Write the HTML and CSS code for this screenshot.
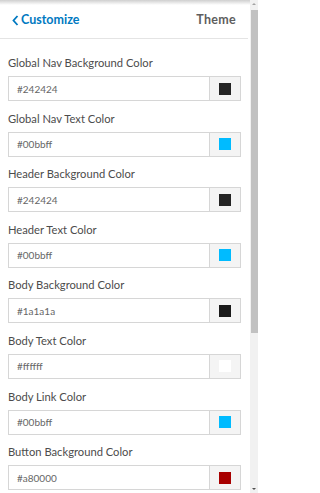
FILE: index.html
```html
<!DOCTYPE html>
<html>
<head>
<meta charset="utf-8">
<link rel="stylesheet" href="styles.css">
</head>
<body>
<div class="frame">
  <div class="pane">
    <div class="topshade"></div>
    <div class="header">
      <a class="back">
        <svg class="chev" width="7" height="11" viewBox="0 0 7 11"><path d="M5.5 1 L1.5 5.5 L5.5 10" fill="none" stroke="#0079c1" stroke-width="1.8"/></svg>
        <span>Customize</span>
      </a>
      <span class="title">Theme</span>
    </div>
    <div class="fields">
      <div class="field"><div class="label">Global Nav Background Color</div><div class="input"><span class="val">#242424</span><span class="btn"><i class="sw" style="background:#242424"></i></span></div></div>
      <div class="field"><div class="label">Global Nav Text Color</div><div class="input"><span class="val">#00bbff</span><span class="btn"><i class="sw" style="background:#00bbff"></i></span></div></div>
      <div class="field"><div class="label">Header Background Color</div><div class="input"><span class="val">#242424</span><span class="btn"><i class="sw" style="background:#242424"></i></span></div></div>
      <div class="field"><div class="label">Header Text Color</div><div class="input"><span class="val">#00bbff</span><span class="btn"><i class="sw" style="background:#00bbff"></i></span></div></div>
      <div class="field"><div class="label">Body Background Color</div><div class="input"><span class="val">#1a1a1a</span><span class="btn"><i class="sw" style="background:#1a1a1a"></i></span></div></div>
      <div class="field"><div class="label">Body Text Color</div><div class="input"><span class="val">#ffffff</span><span class="btn"><i class="sw" style="background:#ffffff"></i></span></div></div>
      <div class="field"><div class="label">Body Link Color</div><div class="input"><span class="val">#00bbff</span><span class="btn"><i class="sw" style="background:#00bbff"></i></span></div></div>
      <div class="field"><div class="label">Button Background Color</div><div class="input"><span class="val">#a80000</span><span class="btn"><i class="sw" style="background:#a80000"></i></span></div></div>
    </div>
  </div>
  <div class="scrollbar">
    <div class="arrow up"></div>
    <div class="thumb"></div>
    <div class="rest"></div>
    <div class="arrow down"></div>
  </div>
</div>
</body>
</html>
```
FILE: styles.css
```css
html, body { margin: 0; padding: 0; background: #fff; }
body { width: 258px; height: 493px; overflow: hidden; font-family: Lato, "Noto Sans", sans-serif; }
.frame { display: flex; width: 258px; height: 493px; }
.pane { width: 250px; height: 493px; overflow: hidden; position: relative; background: #fff; }
.topshade { position: absolute; left: 0; top: 0; width: 250px; height: 5px; background: linear-gradient(#cfcfcf, rgba(255,255,255,0)); }
.header { height: 38px; border-bottom: 1px solid #e4e4e4; display: flex; align-items: center; justify-content: space-between; padding: 0 12px 0 12px; box-sizing: content-box; margin-right: 2px; }
.back { display: flex; align-items: center; gap: 2px; color: #0079c1; font-weight: 700; font-size: 12.5px; padding-top: 1px; }
.chev { margin-top: 1px; }
.title { color: #5e5e5e; font-size: 12.5px; font-weight: 700; letter-spacing: 0.3px; padding-top: 1px; }
.fields { padding: 16px 9px 0 8px; }
.field { margin-bottom: 9.6px; }
.label { height: 16px; line-height: 16px; font-size: 11.2px; color: #4c4c4c; margin-bottom: 5px; }
.input { height: 25px; box-sizing: border-box; border: 1px solid #d6d6d6; display: flex; align-items: stretch; background: #fff; }
.val { flex: 1; display: flex; align-items: center; padding-left: 8px; font-size: 10px; color: #666; }
.btn { width: 30px; border-left: 1px solid #d6d6d6; background: #f4f4f4; display: flex; align-items: center; justify-content: center; }
.sw { display: block; width: 12px; height: 12px; }
.scrollbar { width: 8px; height: 493px; background: #f1f1f1; display: flex; flex-direction: column; align-items: center; }
.arrow { width: 0; height: 0; border-left: 2px solid transparent; border-right: 2px solid transparent; margin: 3px 0; }
.arrow.up { border-bottom: 2px solid #a3a3a3; }
.arrow.down { border-top: 2px solid #505050; }
.thumb { width: 7px; height: 323px; background: #c1c1c1; margin-top: 2px; }
.rest { flex: 1; }
```
